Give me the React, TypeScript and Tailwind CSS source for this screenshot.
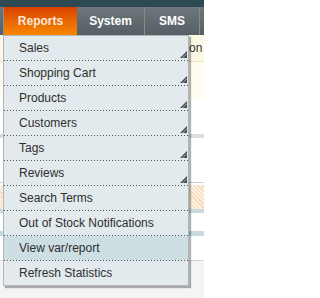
import React from "react";

const items = [
  { label: "Sales", sub: true },
  { label: "Shopping Cart", sub: true },
  { label: "Products", sub: true },
  { label: "Customers", sub: true },
  { label: "Tags", sub: true },
  { label: "Reviews", sub: true },
  { label: "Search Terms", sub: false },
  { label: "Out of Stock Notifications", sub: false },
  { label: "View var/report", sub: false, active: true },
  { label: "Refresh Statistics", sub: false },
];

function SubArrow() {
  return (
    <svg width="7" height="7" viewBox="0 0 7 7" className="mb-[2px] shrink-0 self-end">
      <polygon points="0,7 7,0 7,7" fill="#3f4c52" />
      <line x1="2.5" y1="7" x2="7" y2="2.5" stroke="#c9d3d6" strokeWidth="0.8" />
    </svg>
  );
}

export default function App() {
  return (
    <div className="relative h-[298px] w-[204px] overflow-hidden bg-white font-['Liberation_Sans',Arial,sans-serif]">
      {/* header strip */}
      <div className="h-[7px] bg-[#2d4a52]" />
      {/* nav bar */}
      <div className="flex h-[28px] bg-gradient-to-b from-[#6d777c] to-[#565f63]">
        <div className="w-[3px]" />
        <div className="w-px bg-[#8a9296]" />
        <div className="flex w-[73px] items-center justify-center bg-gradient-to-b from-[#d93f00] to-[#f68700] text-[12px] font-bold text-[#fbe9dc]">
          Reports
        </div>
        <div className="flex w-[67px] items-center justify-center text-[12px] font-bold text-white">
          System
        </div>
        <div className="w-px bg-[#848c90]" />
        <div className="flex w-[54px] items-center justify-center text-[12px] font-bold text-white">
          SMS
        </div>
        <div className="w-px bg-[#848c90]" />
        <div className="flex-1" />
      </div>
      {/* page content behind the menu */}
      <div className="flex flex-col">
        <div className="flex h-[27px] items-center justify-end border-b border-[#efe2b4] bg-[#fdf8e6] text-[12px] text-[#333]">
          <span className="w-[15px] overflow-hidden whitespace-nowrap">on D</span>
        </div>
        <div className="h-[37px] bg-[#fffcf2]" />
        <div className="h-[35px] bg-white" />
        <div className="h-[4px] bg-[#dcdcdc]" />
        <div className="h-[44px] bg-white" />
        <div className="h-px bg-[#cfcfcf]" />
        <div className="h-[2px] bg-white" />
        <div className="h-[24px] bg-[repeating-linear-gradient(45deg,#f8d8b4_0,#f8d8b4_1px,#fdf0e2_1px,#fdf0e2_3px)]" />
        <div className="h-[4px] bg-[#c8dcdf]" />
        <div className="h-[18px] bg-white" />
        <div className="h-[5px] bg-[#c8dadd]" />
        <div className="h-[24px] bg-white" />
        <div className="h-px bg-[#d4d4d4]" />
        <div className="h-[40px] bg-[#f4f4f4]" />
      </div>
      {/* dropdown */}
      <div className="absolute left-[3px] top-[35px] w-[186px] border border-[#aeb8bb] bg-[#e2eaed] shadow-[2px_2px_1px_rgba(0,0,0,0.3)]">
        {items.map((it, i) => (
          <div key={it.label} className="flex flex-col">
            <div
              className={`flex h-[24px] items-center justify-between pl-[15px] pr-px text-[12px] text-[#2e2e2e] ${
                it.active ? "bg-[#cddfe3]" : ""
              }`}
            >
              <span>{it.label}</span>
              {it.sub && <SubArrow />}
            </div>
            {i < items.length - 1 && (
              <div className="h-px bg-[repeating-linear-gradient(90deg,#4d575b_0,#4d575b_1px,transparent_1px,transparent_3px)]" />
            )}
          </div>
        ))}
      </div>
    </div>
  );
}
